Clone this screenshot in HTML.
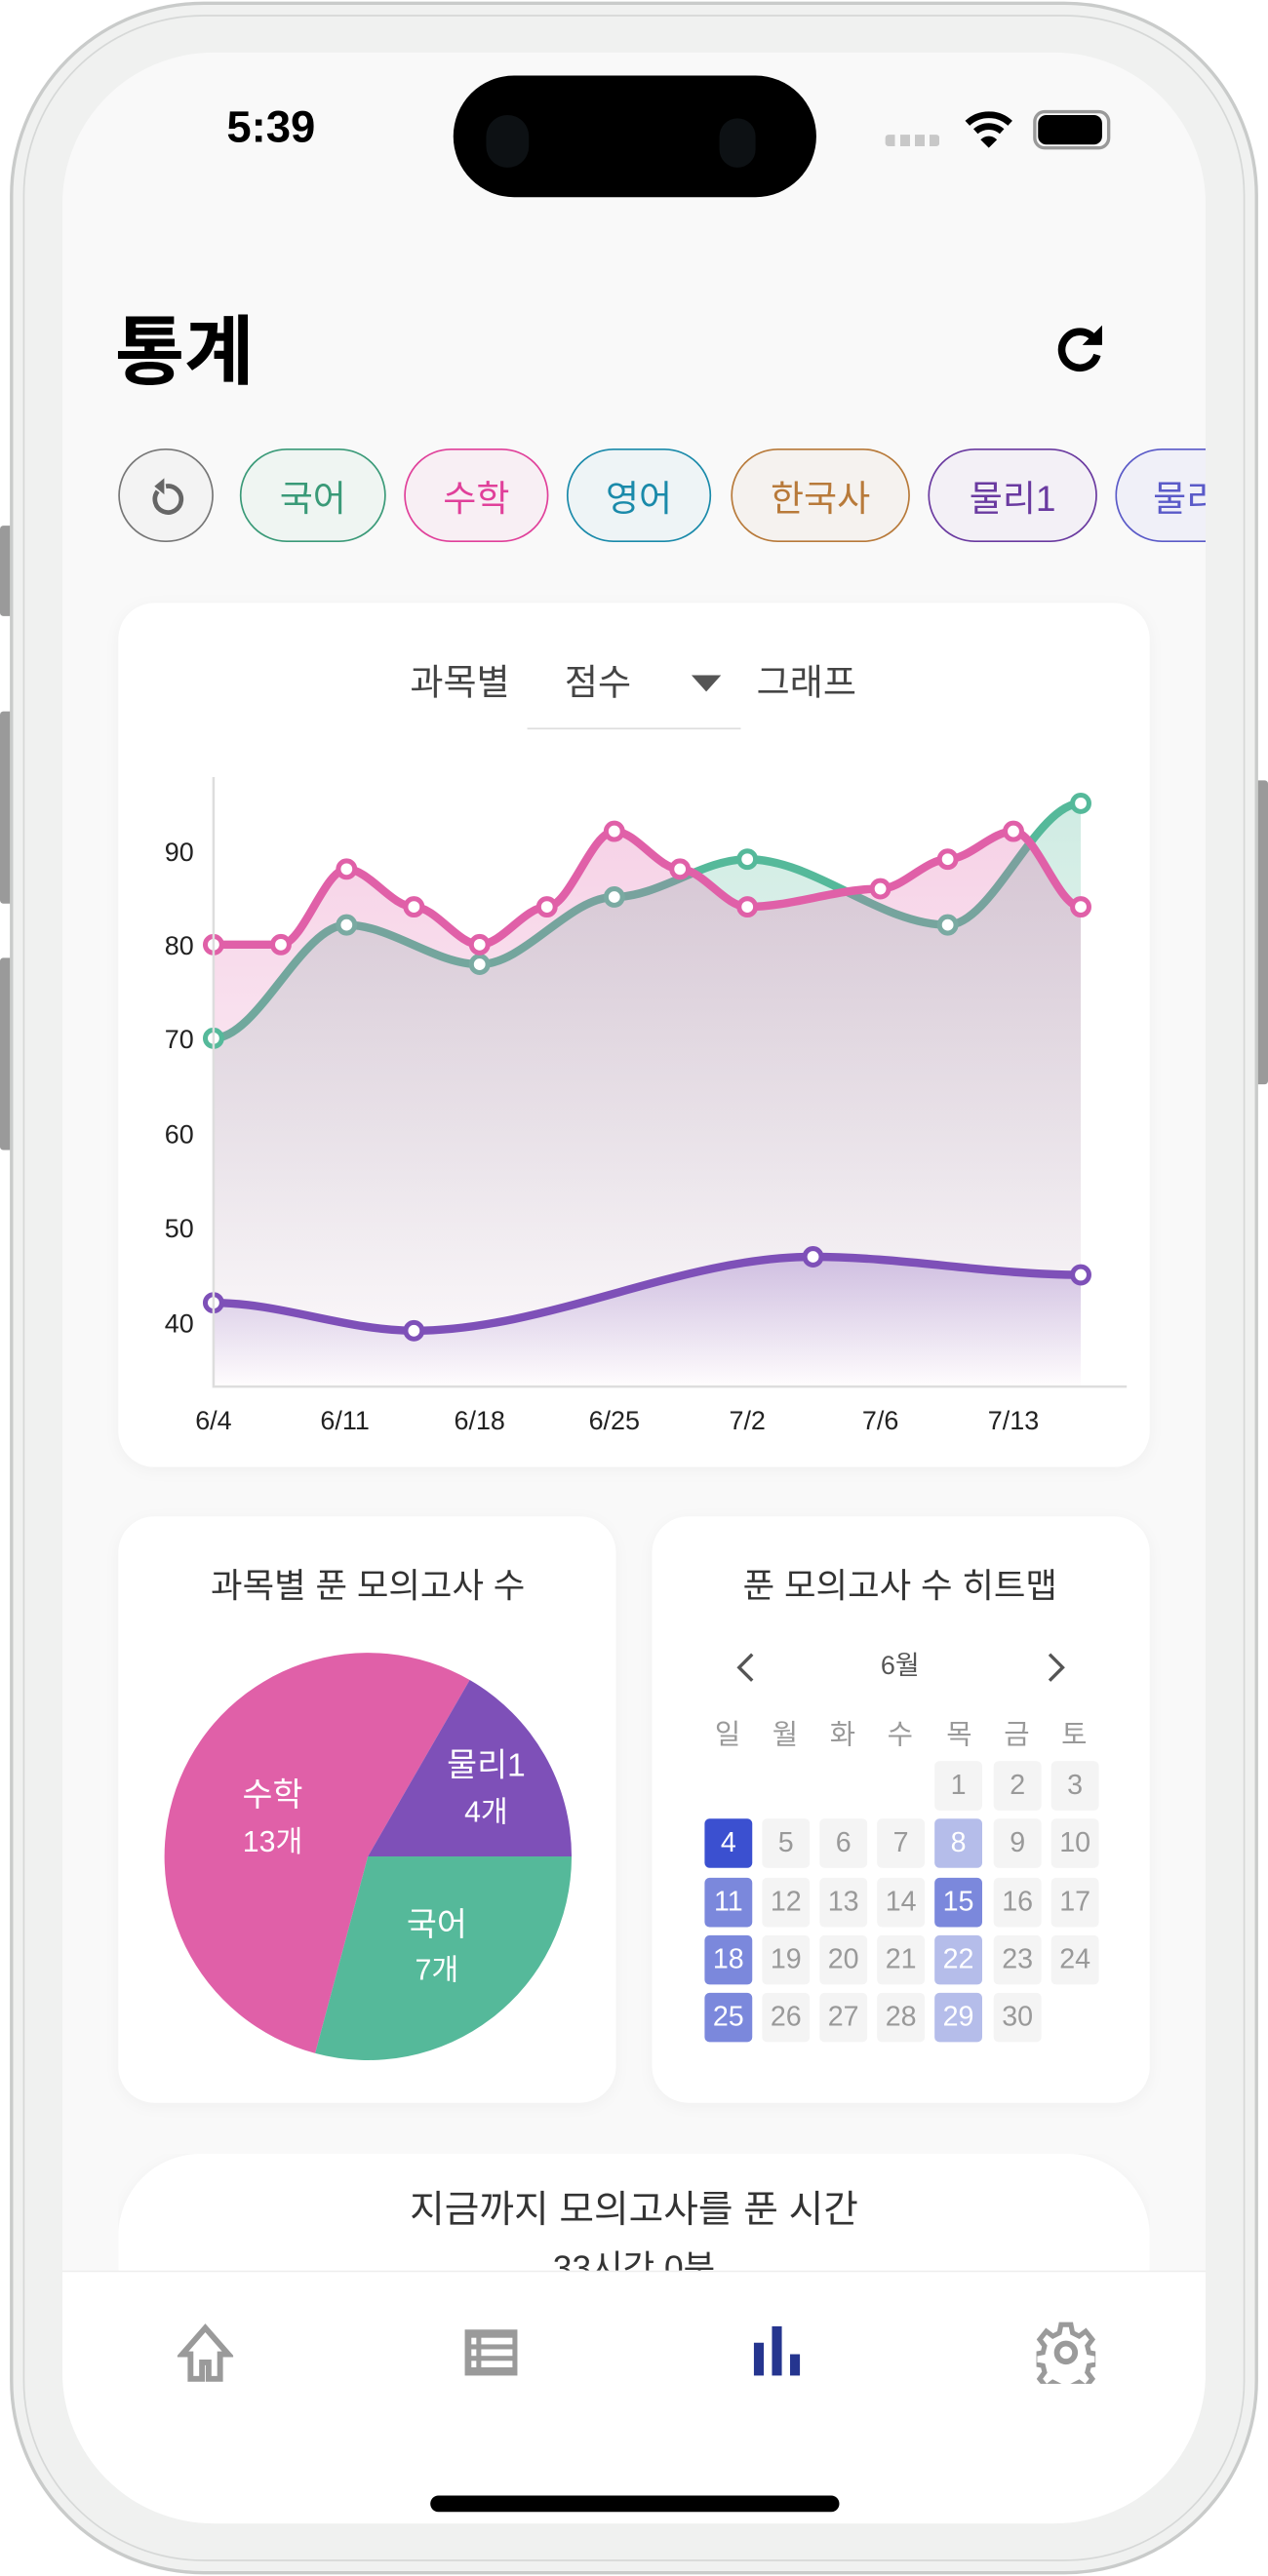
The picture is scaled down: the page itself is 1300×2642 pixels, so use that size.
<!DOCTYPE html>
<html><head><meta charset="utf-8">
<style>
*{margin:0;padding:0;box-sizing:border-box}
html,body{width:1300px;height:2642px;overflow:hidden;background:#fff}
#w{position:absolute;left:0;top:0;width:772px;height:1568px;transform:scale(1.68394,1.68495);transform-origin:0 0;font-family:"Liberation Sans","Noto Sans CJK KR",sans-serif}
.a{position:absolute}
.t{position:absolute;white-space:nowrap;transform:translate(-50%,-50%);line-height:1}
.card{position:absolute;background:#fff;border-radius:22px;box-shadow:0 2px 10px rgba(0,0,0,0.04)}
.chip{position:absolute;top:273px;height:57px;border-radius:29px;border:1px solid;font-size:22px;display:flex;align-items:center;justify-content:center}
.cell{position:absolute;width:29px;height:30px;border-radius:3px;background:#f4f4f4;color:#999;font-size:17px;display:flex;align-items:center;justify-content:center}
.d{background:#7b88dc;color:#fff}.l{background:#b5bdea;color:#fff}
</style></head><body><div id="w">
<div class="a" style="left:0;top:320px;width:10px;height:55px;background:#9a9a9a;border-radius:2px"></div>
<div class="a" style="left:0;top:433px;width:10px;height:117px;background:#9a9a9a;border-radius:2px"></div>
<div class="a" style="left:0;top:583px;width:10px;height:117px;background:#9a9a9a;border-radius:2px"></div>
<div class="a" style="left:762px;top:475px;width:10px;height:185px;background:#9a9a9a;border-radius:2px"></div>
<div class="a" style="left:6px;top:1px;width:760px;height:1566px;border-radius:118px;background:#f0f1f0;border:2px solid #c9cbca"></div>
<div class="a" style="left:14px;top:9px;width:744px;height:1550px;border-radius:110px;border:1px solid #d6d8d7"></div>
<div class="a" style="left:38px;top:32px;width:696px;height:1504px;border-radius:92px;background:#f9f9f9;overflow:hidden">
  <div class="a" style="left:0;top:1350px;width:696px;height:160px;background:#fff;border-top:1px solid #eee"></div>
</div>
<div class="t" style="left:165px;top:78px;font-size:27px;font-weight:bold;color:#000">5:39</div>
<div class="a" style="left:276px;top:46px;width:221px;height:74px;border-radius:37px;background:#000"></div>
<div class="a" style="left:296px;top:70px;width:26px;height:32px;border-radius:13px;background:#0d1114"></div>
<div class="a" style="left:438px;top:72px;width:22px;height:30px;border-radius:11px;background:#0d1114"></div>
<div class="a" style="left:539px;top:82px;width:33px;height:7px;background:repeating-linear-gradient(90deg,#c8c8c8 0 6px,transparent 6px 9px);border-radius:2px"></div>
<svg class="a" style="left:587px;top:66px" width="30" height="26" viewBox="0 0 30 26"><path d="M2 9a19 19 0 0 1 26 0" stroke="#000" stroke-width="4" fill="none"/><path d="M7 14a12 12 0 0 1 16 0" stroke="#000" stroke-width="4" fill="none"/><path d="M15 24l-5-5a7 7 0 0 1 10 0z" fill="#000"/></svg>
<div class="a" style="left:629px;top:67px;width:47px;height:24px;border-radius:7px;border:2px solid #999"></div>
<div class="a" style="left:632px;top:70px;width:39px;height:18px;border-radius:5px;background:#000"></div>
<div class="a" style="left:70px;top:184px;font-size:46px;font-weight:bold;color:#000;line-height:60px">통계</div>
<svg class="a" style="left:642px;top:196px" width="32" height="34" viewBox="0 0 32 34"><path d="M24 10A11 11 0 1 0 26 20" stroke="#000" stroke-width="4.5" fill="none"/><path d="M29 2v12H17z" fill="#000"/></svg>
<div class="chip" style="left:72px;width:58px;border-color:#777;background:#f3f3f3"><svg width="22" height="24" viewBox="0 0 22 24"><path d="M6 9a8 8 0 1 0 5-3" stroke="#666" stroke-width="2.8" fill="none"/><path d="M10 1v10l-6-5z" fill="#666"/></svg></div>
<div class="chip" style="left:146px;width:89px;border-color:#3a9a78;color:#3a9a78;background:#eff5f2">국어</div>
<div class="chip" style="left:246px;width:88px;border-color:#e0409a;color:#e0409a;background:#f8eff4">수학</div>
<div class="chip" style="left:345px;width:88px;border-color:#1a8aaa;color:#1a8aaa;background:#eef4f6">영어</div>
<div class="chip" style="left:445px;width:109px;border-color:#b87a3a;color:#b87a3a;background:#f5f2ef">한국사</div>
<div class="chip" style="left:565px;width:103px;border-color:#6a3aa0;color:#6a3aa0;background:#f3f0f6">물리1</div>
<div style="position:absolute;left:679px;top:260px;width:55px;height:80px;overflow:hidden"><div class="chip" style="left:0;top:13px;width:103px;border-color:#5a5ac8;color:#5a5ac8;background:#f0f0f8;justify-content:flex-start;padding-left:22px">물리2</div></div>
<div class="card" style="left:72px;top:367px;width:628px;height:526px"></div>
<div class="t" style="left:280px;top:416px;font-size:22px;color:#444">과목별</div>
<div class="t" style="left:364px;top:416px;font-size:22px;color:#444">점수</div>
<div class="a" style="left:321px;top:443px;width:130px;height:1px;background:#ddd"></div>
<svg class="a" style="left:421px;top:411px" width="18" height="10"><path d="M0 0h18L9 10z" fill="#555"/></svg>
<div class="t" style="left:491px;top:416px;font-size:22px;color:#444">그래프</div>
<svg class="a" style="left:0;top:0" width="772" height="900" viewBox="0 0 772 900">
<defs>
<linearGradient id="gg" x1="0" y1="0" x2="0" y2="1"><stop offset="0" stop-color="#55b99a" stop-opacity="0.28"/><stop offset="1" stop-color="#55b99a" stop-opacity="0"/></linearGradient>
<linearGradient id="pg" x1="0" y1="0" x2="0" y2="1"><stop offset="0" stop-color="#e060a8" stop-opacity="0.28"/><stop offset="1" stop-color="#e060a8" stop-opacity="0.02"/></linearGradient>
<linearGradient id="vg" x1="0" y1="0" x2="0" y2="1"><stop offset="0" stop-color="#7e50b8" stop-opacity="0.3"/><stop offset="1" stop-color="#7e50b8" stop-opacity="0"/></linearGradient>
</defs>
<g font-size="16" fill="#222" font-family="Liberation Sans,sans-serif">
<text x="118" y="524" text-anchor="end">90</text><text x="118" y="581" text-anchor="end">80</text><text x="118" y="638" text-anchor="end">70</text><text x="118" y="696" text-anchor="end">60</text><text x="118" y="753" text-anchor="end">50</text><text x="118" y="811" text-anchor="end">40</text>
<g text-anchor="middle"><text x="130" y="870">6/4</text><text x="210" y="870">6/11</text><text x="292" y="870">6/18</text><text x="374" y="870">6/25</text><text x="455" y="870">7/2</text><text x="536" y="870">7/6</text><text x="617" y="870">7/13</text></g>
</g>
<path d="M130,632 C157,632 184,563 211,563 C238,563 265,587 292,587 C319.3,587 346.7,546 374,546 C401,546 428,523 455,523 C495.7,523 536.3,563 577,563 C604,563 631,489 658,489 L658,843 L130,843Z" fill="url(#gg)"/>
<path d="M130,632 C157,632 184,563 211,563 C238,563 265,587 292,587 C319.3,587 346.7,546 374,546 C401,546 428,523 455,523 C495.7,523 536.3,563 577,563 C604,563 631,489 658,489" stroke="#55b99a" stroke-width="5" fill="none"/>
<path d="M130,575 C143.7,575 157.3,575 171,575 C184.3,575 197.7,529 211,529 C224.7,529 238.3,552 252,552 C265.3,552 278.7,575 292,575 C305.7,575 319.3,552 333,552 C346.7,552 360.3,506 374,506 C387.3,506 400.7,529 414,529 C427.7,529 441.3,552 455,552 C482,552 509,541 536,541 C549.7,541 563.3,523 577,523 C590.3,523 603.7,506 617,506 C630.7,506 644.3,552 658,552 L658,843 L130,843Z" fill="url(#pg)"/>
<g fill="#fff" stroke="#7aaaa2" stroke-width="3"><circle cx="211" cy="563" r="5"/><circle cx="292" cy="587" r="5"/><circle cx="374" cy="546" r="5"/><circle cx="577" cy="563" r="5"/></g>
<g fill="#fff" stroke="#55b99a" stroke-width="3"><circle cx="130" cy="632" r="5"/><circle cx="455" cy="523" r="5"/><circle cx="658" cy="489" r="5"/></g>
<path d="M130,575 C143.7,575 157.3,575 171,575 C184.3,575 197.7,529 211,529 C224.7,529 238.3,552 252,552 C265.3,552 278.7,575 292,575 C305.7,575 319.3,552 333,552 C346.7,552 360.3,506 374,506 C387.3,506 400.7,529 414,529 C427.7,529 441.3,552 455,552 C482,552 509,541 536,541 C549.7,541 563.3,523 577,523 C590.3,523 603.7,506 617,506 C630.7,506 644.3,552 658,552" stroke="#e060a8" stroke-width="5" fill="none"/>
<g fill="#fff" stroke="#e060a8" stroke-width="3"><circle cx="130" cy="575" r="5"/><circle cx="171" cy="575" r="5"/><circle cx="211" cy="529" r="5"/><circle cx="252" cy="552" r="5"/><circle cx="292" cy="575" r="5"/><circle cx="333" cy="552" r="5"/><circle cx="374" cy="506" r="5"/><circle cx="414" cy="529" r="5"/><circle cx="455" cy="552" r="5"/><circle cx="536" cy="541" r="5"/><circle cx="577" cy="523" r="5"/><circle cx="617" cy="506" r="5"/><circle cx="658" cy="552" r="5"/></g>
<path d="M130,793 C170.7,793 211.3,810 252,810 C333,810 414,765 495,765 C549.3,765 603.7,776 658,776 L658,843 L130,843Z" fill="url(#vg)"/>
<path d="M130,793 C170.7,793 211.3,810 252,810 C333,810 414,765 495,765 C549.3,765 603.7,776 658,776" stroke="#7e50b8" stroke-width="5" fill="none"/>
<g fill="#fff" stroke="#7e50b8" stroke-width="3"><circle cx="130" cy="793" r="5"/><circle cx="252" cy="810" r="5"/><circle cx="495" cy="765" r="5"/><circle cx="658" cy="776" r="5"/></g>
<path d="M130,473 V844 H686" stroke="#ddd" stroke-width="1.5" fill="none"/>
</svg>
<div class="card" style="left:72px;top:923px;width:303px;height:357px"></div>
<div class="t" style="left:224px;top:966px;font-size:21px;color:#333">과목별 푼 모의고사 수</div>
<svg class="a" style="left:0;top:0" width="400" height="1300" viewBox="0 0 400 1300">
<path d="M224,1130 L286,1022.6 A124,124 0 1 0 191.9,1249.8Z" fill="#e060a8"/>
<path d="M224,1130 L286,1022.6 A124,124 0 0 1 348,1130Z" fill="#7e50b8"/>
<path d="M224,1130 L348,1130 A124,124 0 0 1 191.9,1249.8Z" fill="#55b99a"/>
<g fill="#fff" text-anchor="middle" font-family="Liberation Sans,Noto Sans CJK KR,sans-serif"><text x="166" y="1099" font-size="20">수학</text><text x="166" y="1127" font-size="18">13개</text><text x="296" y="1081" font-size="20">물리1</text><text x="296" y="1109" font-size="18">4개</text><text x="266" y="1178" font-size="20">국어</text><text x="266" y="1205" font-size="18">7개</text></g>
</svg>
<div class="card" style="left:397px;top:923px;width:303px;height:357px"></div>
<div class="t" style="left:548px;top:966px;font-size:21px;color:#333">푼 모의고사 수 히트맵</div>
<svg class="a" style="left:447px;top:1005px" width="14" height="20"><path d="M11 2L3 10l8 8" stroke="#555" stroke-width="2" fill="none"/></svg>
<svg class="a" style="left:636px;top:1005px" width="14" height="20"><path d="M3 2l8 8-8 8" stroke="#555" stroke-width="2" fill="none"/></svg>
<div class="t" style="left:548px;top:1015px;font-size:16px;color:#555">6월</div>
<div class="t" style="left:443px;top:1056px;font-size:17px;color:#999">일</div><div class="t" style="left:478px;top:1056px;font-size:17px;color:#999">월</div><div class="t" style="left:513px;top:1056px;font-size:17px;color:#999">화</div><div class="t" style="left:548px;top:1056px;font-size:17px;color:#999">수</div><div class="t" style="left:584px;top:1056px;font-size:17px;color:#999">목</div><div class="t" style="left:619px;top:1056px;font-size:17px;color:#999">금</div><div class="t" style="left:654px;top:1056px;font-size:17px;color:#999">토</div>
<div class="cell" style="left:569px;top:1072px">1</div><div class="cell" style="left:605px;top:1072px">2</div><div class="cell" style="left:640px;top:1072px">3</div>
<div class="cell" style="left:429px;top:1107px;background:#3b50d0;color:#fff">4</div><div class="cell" style="left:464px;top:1107px">5</div><div class="cell" style="left:499px;top:1107px">6</div><div class="cell" style="left:534px;top:1107px">7</div><div class="cell l" style="left:569px;top:1107px">8</div><div class="cell" style="left:605px;top:1107px">9</div><div class="cell" style="left:640px;top:1107px">10</div>
<div class="cell d" style="left:429px;top:1143px">11</div><div class="cell" style="left:464px;top:1143px">12</div><div class="cell" style="left:499px;top:1143px">13</div><div class="cell" style="left:534px;top:1143px">14</div><div class="cell d" style="left:569px;top:1143px">15</div><div class="cell" style="left:605px;top:1143px">16</div><div class="cell" style="left:640px;top:1143px">17</div>
<div class="cell d" style="left:429px;top:1178px">18</div><div class="cell" style="left:464px;top:1178px">19</div><div class="cell" style="left:499px;top:1178px">20</div><div class="cell" style="left:534px;top:1178px">21</div><div class="cell l" style="left:569px;top:1178px">22</div><div class="cell" style="left:605px;top:1178px">23</div><div class="cell" style="left:640px;top:1178px">24</div>
<div class="cell d" style="left:429px;top:1213px">25</div><div class="cell" style="left:464px;top:1213px">26</div><div class="cell" style="left:499px;top:1213px">27</div><div class="cell" style="left:534px;top:1213px">28</div><div class="cell l" style="left:569px;top:1213px">29</div><div class="cell" style="left:605px;top:1213px">30</div>
<div class="a" style="left:72px;top:1311px;width:628px;height:71px;overflow:hidden">
<div class="card" style="left:0;top:0;width:628px;height:160px;border-radius:50px"></div>
<div class="t" style="left:314px;top:34px;font-size:23px;color:#333">지금까지 모의고사를 푼 시간</div>
<div class="t" style="left:314px;top:70px;font-size:21px;color:#333">33시간 0분</div>
</div>
<svg class="a" style="left:108px;top:1414px" width="34" height="36" viewBox="0 0 34 36"><path d="M17 3L3 19h5v15h7V24h4v10h7V19h5z" fill="none" stroke="#9a9a9a" stroke-width="3.5" stroke-linejoin="miter"/></svg>
<svg class="a" style="left:282px;top:1417px" width="34" height="30" viewBox="0 0 34 30"><rect x="1" y="1" width="32" height="28" fill="#9a9a9a"/><g fill="#fff"><rect x="5" y="6" width="3" height="4"/><rect x="11" y="6" width="19" height="4"/><rect x="5" y="13" width="3" height="4"/><rect x="11" y="13" width="19" height="4"/><rect x="5" y="20" width="3" height="4"/><rect x="11" y="20" width="19" height="4"/></g></svg>
<svg class="a" style="left:458px;top:1415px" width="32" height="32" viewBox="0 0 32 32"><rect x="1" y="11" width="6" height="20" fill="#25358f"/><rect x="12" y="1" width="6" height="30" fill="#25358f"/><rect x="23" y="18" width="6" height="13" fill="#25358f"/></svg>
<svg class="a" style="left:631px;top:1413px" width="36" height="38" viewBox="0 0 36 38"><path d="M15 2h6l1 5 4 2 4-3 4 5-3 4 1 4 5 1v6l-5 1-1 4 3 4-4 5-4-3-4 2-1 5h-6l-1-5-4-2-4 3-4-5 3-4-1-4-5-1v-6l5-1 1-4-3-4 4-5 4 3 4-2z" fill="none" stroke="#9a9a9a" stroke-width="3"/><circle cx="18" cy="19" r="5.5" fill="none" stroke="#9a9a9a" stroke-width="3.5"/></svg>
<div class="a" style="left:262px;top:1519px;width:249px;height:10px;border-radius:5px;background:#000"></div>
</div></body></html>
